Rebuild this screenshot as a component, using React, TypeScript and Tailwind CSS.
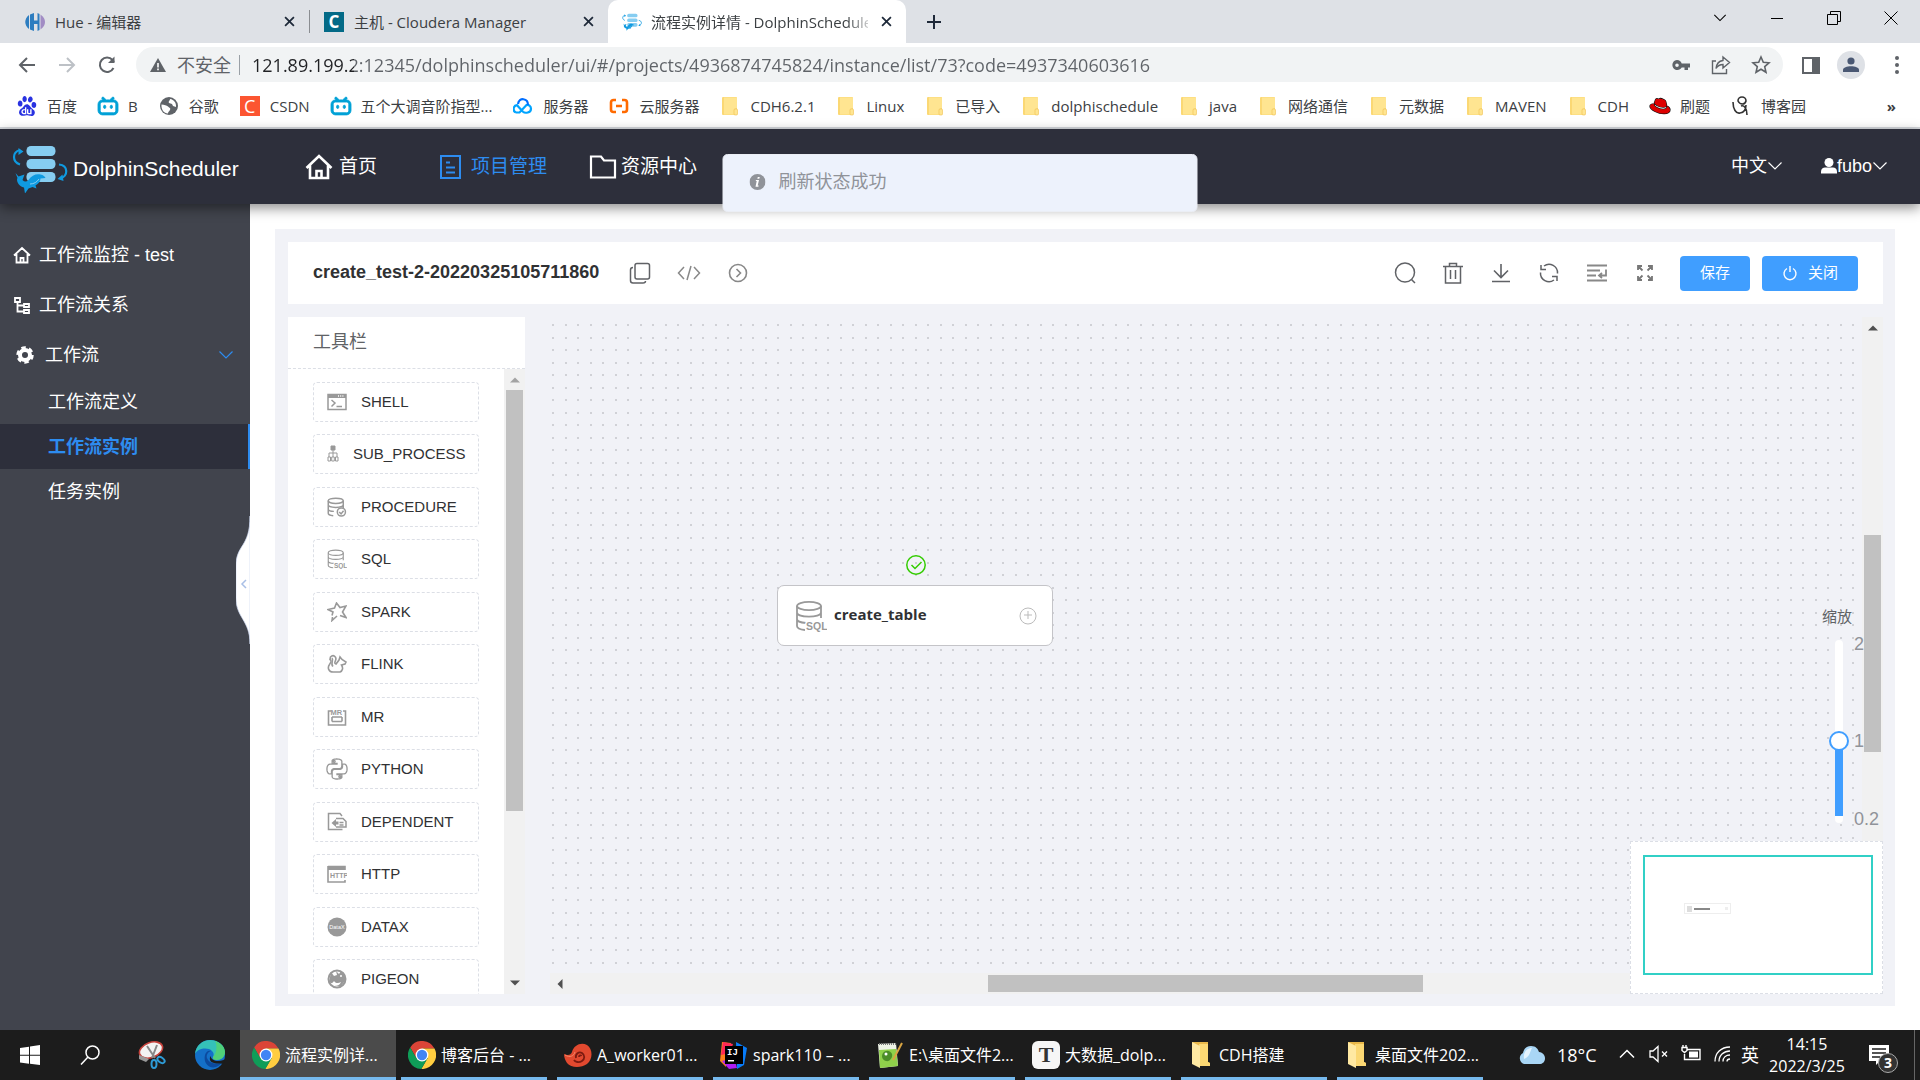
import type { ReactNode } from "react";
import { SiBaidu, SiBilibili, SiPython, SiRedhat } from "react-icons/si";

/* ---------- small shared drawings ---------- */

type IconProps = { className?: string };

function Line({ className = "", box = 24, width = 1, children }: IconProps & { box?: number; width?: number; children: ReactNode }) {
    return (
        <svg viewBox={`0 0 ${box} ${box}`} className={`shrink-0 ${className}`} fill="none" stroke="currentColor" strokeWidth={width} aria-hidden="true">
            {children}
        </svg>
    );
}

function CloseIcon({ className = "" }: IconProps) {
    return <Line box={10} width={1.6} className={className}><path d="M1 1l8 8M9 1l-8 8" /></Line>;
}

function Chevron({ className = "" }: IconProps) {
    return <Line box={16} width={1.2} className={className}><path d="M1.500 4.500L8 11l6.500-6.500" /></Line>;
}

function DolphinLogo({ className = "" }: IconProps) {
    return (
        <svg viewBox="0 0 56 48" className={`shrink-0 ${className}`} aria-hidden="true">
            <g fill="#86cdf1">
                <rect x="14.500" y="1" width="29" height="10" rx="4.500" />
                <rect x="14.500" y="14" width="29" height="10" rx="4.500" />
                <rect x="14.500" y="27" width="29" height="10" rx="4.500" />
            </g>
            <g fill="none" stroke="#0f9ae0" strokeWidth="2.200">
                <path d="M8 5C0 7 0 17 8 19.500" />
                <path d="M47 19.500c9.500 1 9.500 12 1 14" />
            </g>
            <path d="M6.500 3l5 3.500-5 3.500zM50.500 29.500l-5 4.500 6 2z" fill="#0f9ae0" />
            <path d="M3.500 28l3 3.500 6-2-2 5.500c2 2 4 2 6 0 3-5 8-6.500 12-5.500 3 .5 4.500 2 5 3.500l-5 .5c0 3-2 5-5 7l1 3-4-1.500-4 1.500-3.500 5-1-6C6 41 4 35 5.500 33z" fill="#0f9ae0" />
            <path d="M18 39c4 0 7-2 9-5" stroke="#86cdf1" fill="none" />
        </svg>
    );
}

function ChromeLogo({ className = "" }: IconProps) {
    return (
        <svg viewBox="0 0 24 24" className={`shrink-0 ${className}`} aria-hidden="true">
            <path d="M1.900 5.500A12 12 0 0 1 22.700 6.500H12V12L7.240 14.750z" fill="#db4437" />
            <path d="M22.700 6.500A12 12 0 0 1 11.400 24l5.360-9.250L12 12V6.500z" fill="#ffcd40" />
            <path d="M11.400 24A12 12 0 0 1 1.900 5.500l5.340 9.250L12 12l4.760 2.750z" fill="#0f9d58" />
            <circle cx="12" cy="12" r="5.500" fill="#fff" />
            <circle cx="12" cy="12" r="4.400" fill="#4285f4" />
        </svg>
    );
}

function FolderIcon({ className = "" }: IconProps) {
    return (
        <svg viewBox="0 0 20 20" className={`shrink-0 ${className}`} aria-hidden="true">
            <rect x="2" y="1" width="15" height="18" rx="1" fill="#fbd874" />
            <path d="M4 1.500h12a1 1 0 0 1 1 1V12l-3 1v5.500H4z" fill="#ffe591" />
            <rect x="14" y="13" width="3.500" height="6" rx="1" fill="#ffe591" stroke="#f0c04f" strokeWidth=".6" />
        </svg>
    );
}

function ExplorerIcon({ className = "" }: IconProps) {
    return (
        <svg viewBox="0 0 20 28" className={`shrink-0 ${className}`} aria-hidden="true">
            <path d="M1 1h16v20l2 1v3H8z" fill="#e9b84a" />
            <path d="M8 3h9v18l2 1v3H8z" fill="#fbd873" />
            <path d="M1 1l8 4v22l-8-4z" fill="#ffe9a2" />
        </svg>
    );
}

function Cylinder() {
    return (
        <>
            <ellipse cx="14" cy="6" rx="12" ry="4.200" />
            <path d="M2 6v20c0 2 3 3.500 8 4M26 6v12M2 12.500c0 5.500 24 5.500 24 0M2 19c0 2 3.500 3.800 9 4" />
        </>
    );
}

function SqlIcon({ className = "" }: IconProps) {
    return (
        <Line box={32} width={1.8} className={className}>
            <Cylinder />
            <text x="11" y="30" fontSize="10.500" fontWeight="bold" fill="currentColor" stroke="#fff" strokeWidth="3" paintOrder="stroke" fontFamily="Liberation Sans">SQL</text>
        </Line>
    );
}

/* ---------- browser chrome ---------- */

function BrowserTab({ icon, title, active = false }: { icon: ReactNode; title: string; active?: boolean }) {
    return (
        <div className={active ? "flex h-full w-[298px] items-center gap-[9px] rounded-t-[10px] bg-white pr-[10px] pl-[14px]" : "flex h-full w-[298px] items-center gap-[10px] pr-[10px] pl-[14px]"}>
            {icon}
            <span className={active ? "min-w-0 flex-1 overflow-hidden whitespace-nowrap mask-[linear-gradient(to_right,#000_195px,transparent_225px)]" : "min-w-0 flex-1 overflow-hidden whitespace-nowrap"}>{title}</span>
            <button aria-label="关闭标签页" className="p-1 text-gray-800"><CloseIcon className="h-[11px] w-[11px]" /></button>
        </div>
    );
}

function TabStrip() {
    return (
        <div className="flex h-[43px] shrink-0 bg-[#dee1e6] pl-[11px] text-[15px] leading-5 text-[#3c4043]">
            <BrowserTab
                title="Hue - 编辑器"
                icon={
                    <svg viewBox="0 0 20 20" className="h-5 w-5 shrink-0" aria-hidden="true">
                        <path d="M4 3C-1 7-1 13 4 17zM5 2.500L9 1v7.500h3.500V1l2 1v16l-2 1v-7H9v7l-4-1.500z" fill="#2d7dc0" />
                        <path d="M15.500 2.500c6 4 6 11 0 15z" fill="#a18cc4" />
                    </svg>
                }
            />
            <div className="my-[10px] w-px bg-[#8a8d91]" />
            <BrowserTab
                title="主机 - Cloudera Manager"
                icon={<span className="flex h-5 w-5 shrink-0 items-center justify-center bg-[#036a87] text-[17px] leading-5 font-bold text-white">C</span>}
            />
            <BrowserTab active title="流程实例详情 - DolphinScheduler" icon={<DolphinLogo className="h-[18px] w-5" />} />
            <button aria-label="新建标签页" className="ml-4 p-1 text-gray-800">
                <Line box={16} width={2} className="h-4 w-4"><path d="M8 1v14M1 8h14" /></Line>
            </button>
            <div className="ml-auto flex h-9 text-black">
                <button aria-label="搜索标签页" className="flex w-[57px] items-center justify-center"><Chevron className="h-[14px] w-[14px]" /></button>
                <button aria-label="最小化" className="flex w-[57px] items-center justify-center"><Line box={14} className="h-[14px] w-[14px]"><path d="M1 7.500h12" /></Line></button>
                <button aria-label="还原" className="flex w-[57px] items-center justify-center"><Line box={14} className="h-[14px] w-[14px]"><path d="M.5 3.500h10v10H.5zM3.500 3.500v-3h10v10h-3" /></Line></button>
                <button aria-label="关闭" className="flex w-[58px] items-center justify-center"><Line box={14} className="h-[14px] w-[14px]"><path d="M.5.5l13 13M13.500.5l-13 13" /></Line></button>
            </div>
        </div>
    );
}

function AddressBar() {
    return (
        <div className="flex h-[43px] shrink-0 items-center bg-white pr-[5px] pl-[17px] text-[#5f6368]">
            <button aria-label="后退" className="w-10"><Line box={20} width={2} className="h-5 w-5"><path d="M18 10H3M10 3l-7 7 7 7" /></Line></button>
            <button aria-label="前进" className="w-10 text-[#bdc1c6]"><Line box={20} width={2} className="h-5 w-5"><path d="M2 10h15M10 3l7 7-7 7" /></Line></button>
            <button aria-label="重新加载" className="w-[39px]">
                <Line box={20} width={2} className="h-5 w-5"><path d="M16.500 13A7.200 7.200 0 1 1 15.500 5L17 7" /><path d="M17.500 1.500v6.500H11z" fill="currentColor" stroke="none" /></Line>
            </button>
            <div className="flex h-[35px] flex-1 items-center rounded-full bg-[#f1f3f4] pr-[2px] pl-[14px] text-[18px] leading-6">
                <svg viewBox="0 0 16 16" className="h-4 w-4 shrink-0" aria-hidden="true"><path d="M8 1l8 14H0z" fill="#5f6368" /><path d="M7.200 6h1.600v4.500H7.200zM7.200 11.500h1.600v1.700H7.200z" fill="#fff" /></svg>
                <span className="ml-[11px] shrink-0">不安全</span>
                <div className="mx-2 h-5 w-px shrink-0 bg-[#9aa0a6]" />
                <input
                    aria-label="地址"
                    className="min-w-0 flex-1 bg-[linear-gradient(to_right,#202124_106px,#5f6368_106px)] bg-clip-text pl-1 text-transparent outline-none"
                    defaultValue="121.89.199.2:12345/dolphinscheduler/ui/#/projects/4936874745824/instance/list/73?code=4937340603616"
                />
                <div className="flex">
                    <button aria-label="密码" className="flex w-10 justify-center">
                        <svg viewBox="0 0 20 20" className="h-5 w-5" fill="currentColor" fillRule="evenodd"><path d="M6 5a5 5 0 0 1 4.700 3.500H19v4h-2V15h-3.500v-2.500h-2.800A5 5 0 1 1 6 5zm0 3.500a1.800 1.800 0 1 0 0 3.600 1.800 1.800 0 0 0 0-3.600z" /></svg>
                    </button>
                    <button aria-label="分享" className="flex w-10 justify-center"><Line box={20} width={1.4} className="h-5 w-5"><path d="M5 6H1.500v12.500h14V14M12 2l6.500 5.500L12 13v-3.500c-3.500 0-5.500 1.500-7 4C5.500 9 8 6 12 5.500z" /></Line></button>
                    <button aria-label="收藏" className="flex w-10 justify-center"><Line box={20} width={1.6} className="h-5 w-5"><path d="M10 2l2.300 5.300 5.700.5-4.300 3.800 1.300 5.700-5-3-5 3 1.300-5.700L2 7.800l5.700-.5z" /></Line></button>
                </div>
            </div>
            <button aria-label="侧边栏" className="ml-[18px] flex w-5 justify-center"><Line box={20} width={2} className="h-5 w-5"><path d="M2 3h16v15H2z" /><path d="M12 3h6v15h-6z" fill="currentColor" /></Line></button>
            <button aria-label="用户" className="mx-4 flex h-7 w-7 items-center justify-center rounded-full bg-[#dee1e6]">
                <svg viewBox="0 0 16 16" className="h-4 w-4" fill="#4a5873"><circle cx="8" cy="4" r="3.600" /><path d="M0 15v-2c0-5 16-5 16 0v2z" /></svg>
            </button>
            <button aria-label="菜单" className="mr-[10px] ml-2 flex w-4 justify-center"><svg viewBox="0 0 4 18" className="h-[18px] w-1" fill="currentColor"><circle cx="2" cy="2" r="2" /><circle cx="2" cy="9" r="2" /><circle cx="2" cy="16" r="2" /></svg></button>
        </div>
    );
}

const bili = <SiBilibili className="h-5 w-5 shrink-0 overflow-visible text-[#00a1d6]" stroke="currentColor" strokeWidth={1} />;
const folder = <FolderIcon className="h-5 w-5" />;

const bookmarks: { name: string; icon: ReactNode }[] = [
    { name: "百度", icon: <SiBaidu className="h-5 w-5 shrink-0 text-[#2932e1]" /> },
    { name: "B", icon: bili },
    {
        name: "谷歌",
        icon: <svg viewBox="0 0 20 20" className="h-5 w-5 shrink-0"><circle cx="10" cy="10" r="9" fill="#5f6368" /><path d="M2.500 8.500c3 .5 5 .5 6.500 2s3 1.500 2 3.500-2 1.500-2 3.500c-4 0-7-4-6.500-9zM11 3c0 2-2 2-1 4l3 1 1 2 3 1c.5-4-2-7.500-6-8z" fill="#fff" /></svg>,
    },
    { name: "CSDN", icon: <span className="flex h-5 w-5 shrink-0 items-center justify-center bg-[#fc5531] text-[18px] leading-5 text-white">C</span> },
    { name: "五个大调音阶指型...", icon: bili },
    {
        name: "服务器",
        icon: <Line box={20} width={2.2} className="h-5 w-5"><path d="M3 16.500a3.800 3.800 0 0 1 1-7.300l6 6.500c2 1.800 8 1.300 8-3 0-3-2.500-4-4.500-3.700L6.500 16.500H3" stroke="#00a4ff" /><path d="M5 8c1-7 10-6 10 1" stroke="#006eff" /></Line>,
    },
    { name: "云服务器", icon: <Line box={20} width={2.6} className="h-5 w-5 text-[#ff6a00]"><path d="M7 4H4.500C3 4 2 5 2 6.500v7C2 15 3 16 4.500 16H7M13 4h2.500C17 4 18 5 18 6.500v7c0 1.500-1 2.500-2.500 2.500H13M7 10h6" /></Line> },
    { name: "CDH6.2.1", icon: folder },
    { name: "Linux", icon: folder },
    { name: "已导入", icon: folder },
    { name: "dolphischedule", icon: folder },
    { name: "java", icon: folder },
    { name: "网络通信", icon: folder },
    { name: "元数据", icon: folder },
    { name: "MAVEN", icon: folder },
    { name: "CDH", icon: folder },
    { name: "刷题", icon: <SiRedhat className="h-5 w-5 shrink-0 overflow-visible text-[#d00]" stroke="#111" strokeWidth={1.5} paintOrder="stroke" /> },
    { name: "博客园", icon: <Line box={20} width={1.6} className="h-5 w-5 text-[#333]"><path d="M2 6c0 7 3 12 7 11 4 0 6-4 6-8M7 5a4 4 0 1 1 8 0c-1 4-6 4-8 0zM10 10c3-1 6 2 6 9" /></Line> },
];

function BookmarkBar() {
    return (
        <nav aria-label="书签栏" className="flex h-[43px] shrink-0 items-center border-b-2 border-[#d5d8dd] bg-white pr-6 pb-[2px] pl-[17px] text-[15px] leading-5 text-[#3c4043]">
            <div className="flex gap-[21px]">
                {bookmarks.map((b, i) => (
                    <a key={i} href="#" className="flex items-center gap-[10px] whitespace-nowrap">
                        {b.icon}
                        {b.name}
                    </a>
                ))}
            </div>
            <button aria-label="更多书签" className="ml-auto font-bold">»</button>
        </nav>
    );
}

/* ---------- application ---------- */

function AppHeader() {
    return (
        <header className="relative z-10 flex h-[75px] shrink-0 items-center bg-[#2d2f3b] text-white shadow-[0_4px_12px_rgba(0,0,0,0.45)]">
            <a href="#" className="flex w-[250px] items-center gap-[5px] pt-1 pl-3 text-[21px] leading-7">
                <DolphinLogo className="h-12 w-14" />
                DolphinScheduler
            </a>
            <nav className="flex gap-[62px] pl-[55px] text-[19px] leading-7">
                <a href="#" className="flex items-center gap-[6px]">
                    <Line box={28} width={2.6} className="h-7 w-7"><path d="M1.500 15L14 3l12.500 12M5 12.500V25h18V12.500M11.500 25v-7h5v7" /></Line>
                    首页
                </a>
                <a href="#" className="flex items-center gap-2 text-[#2d8cf0]">
                    <Line box={24} width={2} className="h-6 w-6"><path d="M2 1h19v22H2zM7 7.500h4M7 12.500h9M7 17.500h9" /></Line>
                    项目管理
                </a>
                <a href="#" className="-ml-5 flex items-center gap-1">
                    <Line box={28} width={2.2} className="h-7 w-7"><path d="M2 3.500h10l3 4h11v17H2z" /></Line>
                    资源中心
                </a>
            </nav>
            <div className="ml-auto flex items-center gap-[38px] pr-8 pb-[2px] text-[18px] leading-6">
                <button className="flex items-center">中文<Chevron className="h-4 w-4" /></button>
                <button className="flex items-center">
                    <svg viewBox="0 0 16 16" className="h-4 w-4" fill="currentColor"><circle cx="8" cy="4.500" r="4.500" /><path d="M0 15.500v-2C0 11 2 9.500 4 9.500h8c2 0 4 1.500 4 4v2z" /></svg>
                    fubo
                    <Chevron className="h-4 w-4" />
                </button>
            </div>
            <div role="status" className="absolute top-[25px] left-1/2 flex h-[58px] w-[475px] -translate-x-1/2 items-center gap-[13px] rounded-[5px] border border-[#ebeef5] bg-[#edf2fc] pb-[2px] pl-[26px] text-[18px] leading-6 text-[#909399]">
                <svg viewBox="0 0 16 16" className="h-4 w-4 shrink-0"><circle cx="8" cy="8" r="8" fill="#909399" /><path d="M8.300 3h2l-.5 1.800h-2zM6.500 6h3l-1.300 5.500h1l-.3 1.200H6L7.200 7H6.200z" fill="#fff" /></svg>
                刷新状态成功
            </div>
        </header>
    );
}

function Sidebar() {
    return (
        <aside className="relative w-[250px] shrink-0 bg-[#41444d] pt-[26px] text-[18px] leading-6 text-white">
            <nav>
                <a href="#" className="flex h-[50px] items-center gap-2 pl-[13px]">
                    <Line box={18} width={1.8} className="h-[18px] w-[18px]"><path d="M1 9.500L9 2l8 7.500M3.500 8v8.500h11V8M7.500 16.500V12h3v4.500" /></Line>
                    工作流监控 - test
                </a>
                <a href="#" className="flex h-[50px] items-center gap-2 pl-[13px]">
                    <Line box={18} width={1.8} className="h-[18px] w-[18px]"><path d="M2 2h5v4H2zM11 8h5v3h-5zM11 14h5v3h-5zM4.500 6v9.500H11M4.500 9.500H11" /></Line>
                    工作流关系
                </a>
                <a href="#" className="flex h-[49px] items-center gap-[11px] pr-4 pl-4">
                    <Line box={18} width={4} className="h-[18px] w-[18px]"><circle cx="9" cy="9" r="5" /><circle cx="9" cy="9" r="7.500" strokeWidth="2.500" strokeDasharray="4.500 3.350" /></Line>
                    工作流
                    <Chevron className="ml-auto h-4 w-4 text-[#2d8cf0]" />
                </a>
                <a href="#" className="flex h-[45px] items-center pl-12">工作流定义</a>
                <a href="#" className="flex h-[45px] items-center border-r-2 border-[#2d8cf0] bg-[#2d2f3b] pl-12 font-bold text-[#2d8cf0]">工作流实例</a>
                <a href="#" className="flex h-[45px] items-center pl-12">任务实例</a>
            </nav>
            {/* collapse handle */}
            <button aria-label="收起菜单" className="absolute top-[312px] right-0">
                <svg viewBox="0 0 14 130" className="h-[130px] w-[14px]">
                    <path d="M14 0C14 32 0 28 0 50v32c0 20 14 22 14 46z" fill="#fff" stroke="#cfdaf2" strokeWidth=".7" />
                    <path d="M10 64l-4 4 4 4" fill="none" stroke="#a9bfe6" strokeWidth="1.500" />
                </svg>
            </button>
        </aside>
    );
}

function Toolbar() {
    return (
        <div className="flex h-[62px] shrink-0 items-center bg-white pr-[25px] pl-[25px] text-[#606266]">
            <h1 className="pb-[2px] text-[18px] leading-6 font-bold text-[#303133]">create_test-2-20220325105711860</h1>
            <div className="flex gap-[25px] pl-[29px]">
                <button aria-label="复制名称" className="flex w-6 justify-center"><Line width={1.5} className="h-6 w-6"><rect x="7" y="2.500" width="14.500" height="15.500" rx="2" /><path d="M5 6.500c-1.500 0-2.500 1-2.500 2.500v10.500c0 1.500 1 2.500 2.500 2.500h10c1.500 0 2.500-.5 2.500-2" /></Line></button>
                <button aria-label="查看变量" className="flex w-6 justify-center text-[#888]"><Line width={1.5} className="h-6 w-6"><path d="M7 6l-5.500 6L7 18M17 6l5.500 6-5.500 6M14 5l-4 14" /></Line></button>
                <button aria-label="启动参数" className="flex w-6 justify-center text-[#888]"><Line width={1.6} className="h-6 w-6"><circle cx="12" cy="12" r="8.500" /><path d="M10.500 8l4 4-4 4" /></Line></button>
            </div>
            <div className="ml-auto flex gap-6 pr-[23px]">
                <button aria-label="搜索"><Line width={1.5} className="h-6 w-6"><circle cx="12" cy="11.500" r="9.500" /><path d="M18.500 18.500l3.500 3.500" /></Line></button>
                <button aria-label="删除"><Line width={1.5} className="h-6 w-6"><path d="M2 5.500h20M4.500 5.500V22h15V5.500M8.500 5.500V2.500h7v3M9.500 9v9M14.500 9v9" /></Line></button>
                <button aria-label="下载"><Line width={1.6} className="h-6 w-6"><path d="M12 3v13M5 9.500l7 7 7-7M3 20.500h18" /></Line></button>
                <button aria-label="刷新"><Line width={1.5} className="h-6 w-6"><path d="M7 5a8.500 8.500 0 0 1 13.500 7.500M4 4v4.500h5M17 19A8.500 8.500 0 0 1 3.500 11.500M20 20v-4.500h-5" /></Line></button>
                <button aria-label="格式化" className="text-[#888]"><Line width={1.8} className="h-6 w-6"><path d="M2 4.500h20M2 9.500h13M2 14.500h9M2 19.500h20M21 8.500v6h-6.500M17 12l-3 2.500 3 2.500" /></Line></button>
                <button aria-label="全屏" className="text-[#777]"><Line width={1.8} className="h-6 w-6"><path d="M5 9V5h4M5 5l4.500 4.500M15 5h4v4M19 5l-4.500 4.500M5 15v4h4M5 19l4.500-4.500M19 15v4h-4M19 19l-4.500-4.500" /></Line></button>
            </div>
            <div className="flex gap-3 text-[15px] leading-5 text-white">
                <button className="h-[35px] rounded-[4px] bg-[#409eff] px-5">保存</button>
                <button className="flex h-[35px] items-center gap-[10px] rounded-[4px] bg-[#409eff] px-5">
                    <Line box={16} width={1.4} className="h-4 w-4"><path d="M5 3.500a6 6 0 1 0 6 0M8 1v6" /></Line>
                    关闭
                </button>
            </div>
        </div>
    );
}

const tasks: { name: string; icon: ReactNode }[] = [
    { name: "SHELL", icon: <Line box={20} width={1.5} className="h-5 w-5"><path d="M1 2.500h18v15H1z" /><path d="M1 2h18v4H1z" fill="currentColor" stroke="none" /><path d="M4.500 8l3.500 3-3.500 3.500M9.500 14.500h5.500" /><path d="M11 4h6" stroke="#fff" strokeDasharray="1 1.200" /></Line> },
    { name: "SUB_PROCESS", icon: <svg viewBox="0 0 12 20" className="h-5 w-3 shrink-0" fill="none" stroke="currentColor"><path d="M4 2h4v4H4z" fill="currentColor" /><path d="M6 6v7M2 13V9h8v4M1 13h2.500v4H1zM4.700 13h2.600v4H4.700zM8.500 13H11v4H8.500z" /></svg> },
    { name: "PROCEDURE", icon: <Line box={32} width={2.4} className="h-5 w-5"><Cylinder /><circle cx="23" cy="24" r="6.500" fill="#fff" /><path d="M19.500 24l3 3 4-5" /></Line> },
    { name: "SQL", icon: <SqlIcon className="h-5 w-5" /> },
    { name: "SPARK", icon: <Line box={20} width={1.6} className="h-5 w-5"><path d="M5 13.500l1-3.500-5-2.500L7.500 6l2-5L13 5.500l6-1.500-3.500 6L19 15.500l-6-2M10 14l-5 4.500.5-3.500" /></Line> },
    { name: "FLINK", icon: <Line box={20} width={1.6} className="h-5 w-5"><path d="M3.500 3c3-3 6.500 0 5 3.500-1 2.500-1 3 .5 3.500l3-4 1-3 2 2.500 4 2.500-1 2-3.500 1c2 3 1 6-1.500 7H6c-4 0-6-4-3.500-7.500C4 8 5 7 3 5.500z" /><path d="M5 4c2 2-2 6 1 8.500" /></Line> },
    { name: "MR", icon: <Line box={20} width={1.6} className="h-5 w-5"><path d="M4 4H1.500v14h17V4H16M5 10h10M5 14.500h10M5 10v4.500M15 10v4.500" /><text x="3.500" y="7.500" fontSize="7.500" fontWeight="bold" fill="currentColor" stroke="none" fontFamily="Liberation Sans">MR</text></Line> },
    { name: "PYTHON", icon: <SiPython className="h-5 w-5 shrink-0 overflow-visible" fill="none" stroke="currentColor" strokeWidth={1.6} /> },
    { name: "DEPENDENT", icon: <Line box={20} width={1.5} className="h-5 w-5"><path d="M15 4l-2-2.500H1.500v16h14M9 6.500h7l3 3v5.500H9M12.500 10.500h4M12.500 13h4" /><path d="M4.500 11L9 7v2.500h2.500v3H9V15z" fill="currentColor" stroke="none" /></Line> },
    { name: "HTTP", icon: <Line box={20} width={1.6} className="h-5 w-5"><path d="M1 2.500h17V6M1 2v16h17v-2" /><path d="M1 2h17v4H1z" fill="currentColor" stroke="none" /><text x="3" y="14" fontSize="7" fontWeight="bold" fill="currentColor" stroke="none" fontFamily="Liberation Sans">HTTP</text></Line> },
    { name: "DATAX", icon: <svg viewBox="0 0 20 20" className="h-5 w-5 shrink-0"><circle cx="10" cy="10" r="9.500" fill="currentColor" /><text x="10" y="12" fontSize="5.500" textAnchor="middle" fill="#fff" fontFamily="Liberation Sans">DataX</text></svg> },
    { name: "PIGEON", icon: <svg viewBox="0 0 20 20" className="h-5 w-5 shrink-0"><circle cx="10" cy="10" r="8.500" fill="none" stroke="currentColor" strokeWidth="2" /><path d="M4 3l3 4 3-1-1-4 3 3 2-3 4 4v6l-4 5H7c3 0 6-1 7-4-3 2-6 1-7-1-1 2-3 3-5 1z" fill="currentColor" /><circle cx="14" cy="7" r="1" fill="#fff" /></svg> },
];

function Arrow({ className = "", d }: IconProps & { d: string }) {
    return <svg viewBox="0 0 10 10" className={`h-[10px] w-[10px] shrink-0 ${className}`} fill="currentColor" aria-hidden="true"><path d={d} /></svg>;
}

function TaskPanel() {
    return (
        <section className="flex w-[237px] shrink-0 flex-col bg-white">
            <h2 className="h-[52px] shrink-0 border-b border-dashed border-[#dcdfe6] pt-[13px] pl-[25px] text-[18px] leading-6 text-[#606266]">工具栏</h2>
            <div className="flex min-h-0 flex-1">
                <ul className="flex-1 overflow-hidden pt-[13px] pl-[25px] text-[15px] leading-5 text-[#303133]">
                    {tasks.map((t) => (
                        <li key={t.name} className="flex h-10 w-[166px] items-center gap-[14px] rounded-[4px] border border-dashed border-[#dcdfe6] pl-[13px] odd:mb-3 even:mb-[13px]">
                            <span className="text-[#999]">{t.icon}</span>
                            {t.name}
                        </li>
                    ))}
                </ul>
                <div className="flex w-[21px] flex-col items-center bg-[#f1f1f1] py-[6px]">
                    <Arrow d="M0 7.500l5-5 5 5z" className="text-[#a3a3a3]" />
                    <div className="mt-[5px] h-[421px] w-[17px] bg-[#c1c1c1]" />
                    <Arrow d="M0 2.500l5 5 5-5z" className="mt-auto text-[#505050]" />
                </div>
            </div>
        </section>
    );
}

function ZoomSlider() {
    return (
        <div className="absolute top-[290px] right-0 w-[61px] text-[#606266]">
            <label htmlFor="zoom" className="block text-[15px] leading-5">缩放</label>
            <div className="mt-[13px] flex h-[183px] gap-[11px] pl-[13px]">
                <input
                    id="zoom"
                    type="range"
                    min="0.2"
                    max="2"
                    step="0.2"
                    defaultValue="1"
                    className="h-full w-2 appearance-none rounded-full bg-[linear-gradient(to_top,#fff_7px,#409eff_7px,#409eff_82px,#fff_82px)] [direction:rtl] [writing-mode:vertical-lr] [&::-webkit-slider-thumb]:h-5 [&::-webkit-slider-thumb]:w-5 [&::-webkit-slider-thumb]:appearance-none [&::-webkit-slider-thumb]:rounded-full [&::-webkit-slider-thumb]:border-2 [&::-webkit-slider-thumb]:border-[#409eff] [&::-webkit-slider-thumb]:bg-white"
                />
                <div className="-my-2 flex flex-col text-[18px] leading-6 text-[#909399]">
                    <span>2</span>
                    <span className="mt-[73px]">1</span>
                    <span className="mt-auto">0.2</span>
                </div>
            </div>
        </div>
    );
}

function MiniMap() {
    return (
        <div className="absolute right-0 bottom-0 h-[153px] w-[253px] border border-dashed border-[#dcdfe6] bg-white pt-[13px] pl-3">
            <div className="h-[120px] w-[230px] border-2 border-[#31d0c6] pt-[46px] pl-[39px]">
                <div className="flex h-[11px] w-[47px] items-center gap-[2px] border border-[#eee] px-[2px]">
                    <div className="h-[6px] w-[5px] bg-[#ddd]" />
                    <div className="h-[2px] w-4 bg-[#888]" />
                    <div className="ml-auto h-[3px] w-[3px] bg-[#eee]" />
                </div>
            </div>
        </div>
    );
}

function Canvas() {
    return (
        <section className="relative ml-[25px] flex min-w-0 flex-1 flex-col">
            <div className="flex min-h-0 flex-1">
                <div className="relative min-w-0 flex-1 overflow-hidden">
                    {/* dot grid */}
                    <svg className="absolute inset-0 h-full w-full" aria-hidden="true">
                        <pattern id="dots" width="25" height="25" patternUnits="userSpaceOnUse">
                            <path d="M2 7h2v2H2zM15 7h2v2h-2zM2 20h2v2H2zM15 20h2v2h-2z" fill="#d0d1d6" />
                        </pattern>
                        <rect width="100%" height="100%" fill="url(#dots)" />
                    </svg>
                    <svg viewBox="0 0 20 20" className="absolute top-[238px] left-[356px] h-5 w-5" fill="none" stroke="#33cc00" strokeWidth="1.500" aria-label="成功">
                        <circle cx="10" cy="10" r="9.200" />
                        <path d="M5.500 10l3.500 3.500 6.500-6.500" />
                    </svg>
                    <div className="absolute top-[268px] left-[227px] flex h-[61px] w-[276px] items-center rounded-[7px] border border-[#c4c4c8] bg-white pr-[15px] pl-[17px] font-['Open_Sans','Noto_Sans_CJK_SC',sans-serif] text-[15px] leading-5 font-bold text-[#303133]">
                        <SqlIcon className="h-8 w-8 text-[#999]" />
                        <span className="ml-[7px] pb-1">create_table</span>
                        <Line box={18} className="ml-auto h-[18px] w-[18px] text-[#bbb]"><circle cx="9" cy="9" r="8" /><path d="M9 4v8M5 8h8" /></Line>
                    </div>
                </div>
                <div className="flex w-[21px] flex-col items-center bg-[#f1f1f1] pt-[6px] text-[#505050]">
                    <Arrow d="M0 7.500l5-5 5 5z" />
                    <div className="mt-[202px] h-[217px] w-[17px] bg-[#c1c1c1]" />
                </div>
            </div>
            <div className="flex h-[21px] shrink-0 items-center bg-[#f1f1f1] pl-[5px] text-[#505050]">
                <Arrow d="M7.500 0l-5 5 5 5z" />
                <div className="ml-[423px] h-[17px] w-[435px] bg-[#c1c1c1]" />
            </div>
            <ZoomSlider />
            <MiniMap />
        </section>
    );
}

/* ---------- desktop taskbar ---------- */

const windows: { name: string; icon: ReactNode; active?: boolean }[] = [
    { name: "流程实例详...", icon: <ChromeLogo className="h-7 w-7" />, active: true },
    { name: "博客后台 - ...", icon: <ChromeLogo className="h-7 w-7" /> },
    {
        name: "A_worker01...",
        icon: <svg viewBox="0 0 28 28" className="h-7 w-7 shrink-0"><path d="M0 13c4 2 7 1 8-2C10 4 17 1 23 4c6 4 6 14 0 19-6 4-16 4-20-1-2-3-3-6-3-9z" fill="#e2492f" /><path d="M1 14c5 3 9 1 10-3" fill="none" stroke="#f58a6a" /><path d="M12 17c-1-4 3-7 6-5s3 6 0 8-7 1-8-1M15 16c0-2 2-2 2.500-1" fill="none" stroke="#7c1a10" strokeWidth="1.800" /></svg>,
    },
    {
        name: "spark110 – ...",
        icon: <svg viewBox="0 0 28 28" className="h-7 w-7 shrink-0"><path d="M2 1l9 1-5 24-6-6z" fill="#fc801d" /><path d="M3 1l10 2-3 9-9 2z" fill="#fe2857" /><path d="M16 1l11 6-3 17-7 4z" fill="#087cfa" /><path d="M2 20l12-3 3 10-8 1z" fill="#af1df5" /><path d="M5 5h18v18H5z" fill="#000" /><text x="7" y="14" fontSize="9" fontWeight="bold" fill="#fff" fontFamily="Liberation Mono">IJ</text><path d="M8 19h6v1.500H8z" fill="#fff" /></svg>,
    },
    {
        name: "E:\\桌面文件2...",
        icon: <svg viewBox="0 0 28 28" className="h-7 w-7 shrink-0"><path d="M2 3l18-1 2 23-18 2z" fill="#eef3e6" /><path d="M3 9l17-1 2 17-18 2z" fill="#8fd14a" /><path d="M7 12c3-4 8-2 9 1s-2 8-6 7-5-5-3-8z" fill="#4c8e28" /><circle cx="10" cy="13" r="1.500" fill="#fff" /><path d="M26 2l-9 17" stroke="#d9a441" strokeWidth="2" /><path d="M3 3h17" stroke="#777" strokeWidth="2" strokeDasharray="1 1" /></svg>,
    },
    { name: "大数据_dolp...", icon: <span className="flex h-7 w-7 shrink-0 items-center justify-center rounded-[6px] bg-[#f6f6f6] font-['Liberation_Serif',serif] text-[22px] leading-7 font-bold text-[#333]">T</span> },
    { name: "CDH搭建", icon: <ExplorerIcon className="mx-[3px] h-7 w-5" /> },
    { name: "桌面文件202...", icon: <ExplorerIcon className="mx-[3px] h-7 w-5" /> },
];

function Taskbar() {
    return (
        <footer className="flex h-[50px] shrink-0 items-center bg-[#1c1c1c] text-[16px] leading-[22px] text-white">
            <button aria-label="开始" className="flex w-[60px] justify-center"><svg viewBox="0 0 20 20" className="h-5 w-5" fill="#fff"><path d="M0 3l9-1.300v8H0zM10 1.500L20 0v9.700H10zM0 10.700h9v8L0 17.500zM10 10.700h10V20l-10-1.300z" /></svg></button>
            <button aria-label="搜索" className="flex w-[60px] justify-center"><Line box={20} width={1.5} className="h-5 w-5"><circle cx="12.500" cy="7.500" r="6.500" /><path d="M8 12l-7 7.500" /></Line></button>
            <button aria-label="截图" className="flex w-[60px] justify-center pl-1">
                <svg viewBox="0 0 28 28" className="h-7 w-7"><ellipse cx="13" cy="9" rx="12" ry="7.500" fill="#f3f3f3" stroke="#c6423c" strokeWidth="1.600" transform="rotate(-20 13 9)" /><path d="M9 5l8 12M19 4l-5 13" stroke="#888" strokeWidth="2" /><path d="M1 14l10 4-3 3-7-3z" fill="#999" /><g fill="none" stroke="#2e9bd6" strokeWidth="2"><ellipse cx="16" cy="23" rx="2.500" ry="4" /><ellipse cx="23" cy="19" rx="4" ry="2.500" transform="rotate(35 23 19)" /></g></svg>
            </button>
            <button aria-label="Edge" className="flex w-[60px] justify-center">
                <svg viewBox="0 0 30 30" className="h-[30px] w-[30px]">
                    <circle cx="15" cy="15" r="15" fill="#1470c8" />
                    <path d="M0 14C1 5 8 0 15 0c9 0 15 6 15 12 0 5-4 8-8 8-3 0-5-1-4-3s1-4-1-6C13 7 3 8 0 14z" fill="#35c1b8" />
                    <path d="M20 1c6 2 10 7 10 11 0 5-4 8-8 8-3 0-5-1-4-3 3-3 5-10 2-16z" fill="#5cd65c" opacity=".7" />
                    <path d="M10 15c-2 8 4 14 11 12 3-1 5-3 6-5-4 3-13 2-15-4-1-3 1-6 4-7-3-1-5 1-6 4z" fill="#0c4a9e" />
                    <path d="M15.500 16c1 5 7 6 13 4 1-1 1.500 0 1.500 1l-2 3c-3-1-6 0-9-1-4-1-5-4-3.500-7z" fill="#1c1c1c" />
                </svg>
            </button>
            <div className="flex h-full gap-[10px]">
                {windows.map((w, i) => (
                    <button key={i} className={w.active ? "-mr-[5px] flex h-full w-[156px] items-center gap-[5px] border-b-[3px] border-[#76b9ed] bg-[#4b4b4b] pt-[3px] pl-3 text-left whitespace-nowrap" : "flex h-full w-[146px] items-center gap-[5px] border-b-[3px] border-[#76b9ed] pt-[3px] pl-[7px] text-left whitespace-nowrap"}>
                        {w.icon}
                        {w.name}
                    </button>
                ))}
            </div>
            <div className="ml-auto flex h-full items-center">
                <svg viewBox="0 0 28 20" className="h-5 w-7"><path d="M6 19a6 6 0 0 1-1-11C6 3 9 1 13 1c5 0 7 3 8 6 8 1 8 12 0 12z" fill="#a9d6f5" /><path d="M6 14c-1-7 3-11 8-11-2 3-2 9-8 11z" fill="#e4f4ff" /></svg>
                <span className="ml-[11px] w-[60px] text-[18px]">18°C</span>
                <div className="flex gap-3">
                    <Line box={20} width={1.5} className="h-5 w-5"><path d="M3 13.500l7-7 7 7" /></Line>
                    <Line box={20} width={1.3} className="h-5 w-5"><path d="M1 7h3l5-4.500v15L4 13H1zM13 7.500l5 5M18 7.500l-5 5" /></Line>
                    <Line box={20} width={1.4} className="h-5 w-5"><path d="M6 5.500h13v10H3.500V10" /><path d="M8 7.500h9v6H8z" fill="currentColor" stroke="none" /><path d="M1 3.500h5v3l-2.500 2L1 6.500zM2 1v2.500M5 1v2.500" /></Line>
                    <Line box={20} width={1.3} className="h-5 w-5"><path d="M2 17.500C2 9 8 3 17 3M6 17.500C6 11 11 7 17 7M10 17.500c0-4 3-6.500 7-6.500M14 17.500c0-2 1-2.500 3-2.500" /></Line>
                    <span className="-ml-1 text-[18px]">英</span>
                </div>
                <time className="ml-[10px] w-[76px] text-center">14:15<br />2022/3/25</time>
                <button aria-label="通知" className="relative ml-6 h-10 w-[30px]">
                    <svg viewBox="0 0 20 20" className="absolute top-[10px] left-0 h-5 w-5"><path d="M0 0h20v16h-9l-4 4v-4H0z" fill="#fff" /><path d="M3 4h14M3 8h14M3 12h8" stroke="#1c1c1c" strokeWidth="1.400" /></svg>
                    <span className="absolute top-[18px] left-[9px] h-5 w-5 rounded-full border border-[#aaa] bg-[#333] text-[14px] leading-[18px] font-bold">3</span>
                </button>
                <div className="mr-[5px] ml-[15px] h-full w-px bg-[#666]" />
            </div>
        </footer>
    );
}

export default function App() {
    return (
        <div className="flex h-screen flex-col overflow-hidden bg-white font-['Open_Sans','Noto_Sans_CJK_SC',sans-serif]">
            <TabStrip />
            <AddressBar />
            <BookmarkBar />
            <div className="flex min-h-0 flex-1 flex-col font-['Liberation_Sans','Noto_Sans_CJK_SC',sans-serif]">
                <AppHeader />
                <div className="flex min-h-0 flex-1">
                    <Sidebar />
                    <main className="flex min-w-0 flex-1 pt-[25px] pr-[25px] pb-6 pl-[25px]">
                        <div className="flex min-w-0 flex-1 flex-col gap-[13px] bg-[#f1f2f7] p-3 pt-[13px] pl-[13px]">
                            <Toolbar />
                            <div className="flex min-h-0 flex-1">
                                <TaskPanel />
                                <Canvas />
                            </div>
                        </div>
                    </main>
                </div>
            </div>
            <Taskbar />
        </div>
    );
}
